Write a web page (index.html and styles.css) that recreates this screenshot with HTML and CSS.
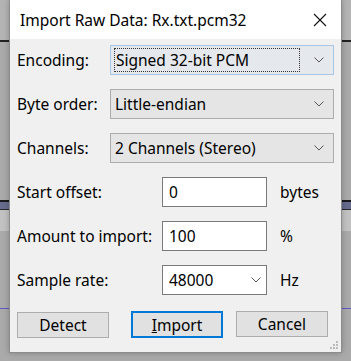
FILE: index.html
```html
<!DOCTYPE html>
<html lang="en">
<head>
    <meta charset="UTF-8">
    <title>Import Raw Data</title>
    <link rel="stylesheet" href="styles.css">
</head>
<body>
    <!-- audacity track area showing behind the dialog -->
    <div class="backdrop">
        <div class="track-line line-top"></div>
        <div class="track-band"></div>
        <div class="track-light"></div>
        <div class="track-wave"></div>
    </div>

    <div class="dialog">
        <div class="titlebar">
            <span class="title">Import Raw Data: Rx.txt.pcm32</span>
            <svg class="close" width="14" height="14" viewBox="0 0 14 14">
                <path d="M1 1 L13 13 M13 1 L1 13" stroke="#111" stroke-width="1.1" fill="none"/>
            </svg>
        </div>

        <div class="content">
            <div class="row">
                <span class="label">Encoding:</span>
                <div class="combo focused">
                    <span class="focus-rect">Signed 32-bit PCM</span>
                    <svg class="chevron" width="10" height="6" viewBox="0 0 10 6"><path d="M0.5 0.5 L5 5 L9.5 0.5" stroke="#555" fill="none"/></svg>
                </div>
            </div>
            <div class="row">
                <span class="label">Byte order:</span>
                <div class="combo">
                    <span class="value">Little-endian</span>
                    <svg class="chevron" width="10" height="6" viewBox="0 0 10 6"><path d="M0.5 0.5 L5 5 L9.5 0.5" stroke="#555" fill="none"/></svg>
                </div>
            </div>
            <div class="row">
                <span class="label">Channels:</span>
                <div class="combo">
                    <span class="value">2 Channels (Stereo)</span>
                    <svg class="chevron" width="10" height="6" viewBox="0 0 10 6"><path d="M0.5 0.5 L5 5 L9.5 0.5" stroke="#555" fill="none"/></svg>
                </div>
            </div>
            <div class="row">
                <span class="label wide">Start offset:</span>
                <div class="field">0</div>
                <span class="unit">bytes</span>
            </div>
            <div class="row">
                <span class="label wide">Amount to import:</span>
                <div class="field">100</div>
                <span class="unit">%</span>
            </div>
            <div class="row">
                <span class="label wide">Sample rate:</span>
                <div class="field edit-combo">
                    <span>48000</span>
                    <svg class="chevron" width="10" height="6" viewBox="0 0 10 6"><path d="M0.5 0.5 L5 5 L9.5 0.5" stroke="#555" fill="none"/></svg>
                </div>
                <span class="unit">Hz</span>
            </div>

            <div class="buttons">
                <button class="btn detect">Detect</button>
                <button class="btn default"><u>I</u>mport</button>
                <button class="btn cancel">Cancel</button>
            </div>
        </div>

        <svg class="grip" width="9" height="9" viewBox="0 0 9 9">
            <rect x="6" y="0" width="2" height="2" fill="#bbb"/>
            <rect x="3" y="3" width="2" height="2" fill="#bbb"/>
            <rect x="6" y="3" width="2" height="2" fill="#bbb"/>
            <rect x="0" y="6" width="2" height="2" fill="#bbb"/>
            <rect x="3" y="6" width="2" height="2" fill="#bbb"/>
            <rect x="6" y="6" width="2" height="2" fill="#bbb"/>
        </svg>
    </div>
</body>
</html>
```

FILE: styles.css
```css
body {
    margin: 0;
    padding: 0;
    width: 351px;
    height: 361px;
    overflow: hidden;
    background: #a9a9a9;
    font-family: "Noto Sans", "Open Sans", Arial, sans-serif;
    font-size: 15.5px;
    color: #000;
    position: relative;
}
.backdrop {
    position: absolute;
    left: 0;
    top: 0;
    width: 351px;
    height: 361px;
    background: linear-gradient(#b4b4b4 0, #b4b4b4 40px, #aaaaaa 40px);
}
.track-line {
    position: absolute;
    left: 0;
    right: 0;
    height: 2px;
    background: #222;
}
.line-top {
    top: 40px;
}
.track-band {
    position: absolute;
    left: 0;
    right: 0;
    top: 200px;
    height: 10px;
    background: #676c8e;
    border-top: 2px solid #1a1a1a;
    border-bottom: 1px solid #2a2a2a;
    box-sizing: border-box;
}
.track-light {
    position: absolute;
    left: 0;
    right: 0;
    top: 210px;
    height: 21px;
    background: #c2c2c2;
}
.track-wave {
    position: absolute;
    left: 0;
    right: 0;
    top: 308px;
    height: 1px;
    background: #5a5ac8;
}

/* the dialog window sits on the desktop */
.dialog {
    position: absolute;
    left: 9px;
    top: -1px;
    width: 331px;
    height: 352px;
    background: #f0f0f0;
    border: 1px solid #8c8c8c;
    box-shadow: 0 0 6px rgba(0,0,0,0.25);
}
.titlebar {
    height: 39px;
    background: #fff;
    display: flex;
    align-items: center;
    justify-content: space-between;
    padding: 0 14px 0 10px;
}
.title {
    font-size: 15.5px;
    color: #000;
    margin-top: 1px;
}
.close {
    margin-top: 1px;
}
.content {
    padding: 6px 7px 0 7px;
    display: flex;
    flex-direction: column;
    gap: 14px;
}
.row {
    display: flex;
    align-items: center;
    height: 30px;
}
.label {
    width: 93px;
    flex-shrink: 0;
}
.label.wide {
    width: 145px;
}
.combo {
    width: 224px;
    height: 30px;
    box-sizing: border-box;
    background: #e5e5e5;
    border: 1px solid #adadad;
    display: flex;
    align-items: center;
    justify-content: space-between;
    padding: 0 9px 0 4px;
}
.combo.focused {
    background: #e5e8ec;
    border-color: #a6c6e3;
    padding-left: 3px;
}
.focus-rect {
    flex: 1;
    margin-right: 14px;
    height: 24px;
    line-height: 22px;
    box-sizing: border-box;
    border: 1px dotted #333;
    padding-left: 1px;
}
.chevron {
    flex-shrink: 0;
}
.field {
    width: 105px;
    height: 30px;
    box-sizing: border-box;
    background: #fff;
    border: 1px solid #7a7a7a;
    padding: 0 6px;
    display: flex;
    align-items: center;
}
.edit-combo {
    justify-content: space-between;
    padding-right: 5px;
}
.unit {
    margin-left: 13px;
}
.buttons {
    display: flex;
    margin-top: 3px;
}
.btn {
    font-family: inherit;
    font-size: 15.5px;
    height: 26px;
    width: 92px;
    padding: 0;
    background: #e1e1e1;
    border: 1px solid #adadad;
    color: #000;
}
.btn.default {
    margin-left: 22px;
    height: 27px;
    margin-top: -1px;
    border: 2px solid #0078d7;
}
.btn.cancel {
    margin-left: 13px;
    margin-top: -1px;
}
.btn u {
    text-decoration-thickness: 1px;
}
.grip {
    position: absolute;
    right: 2px;
    bottom: 2px;
}
```
